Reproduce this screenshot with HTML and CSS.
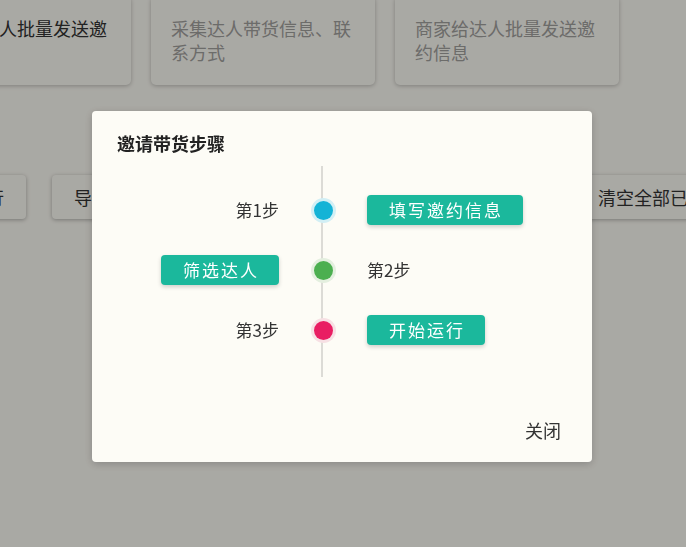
FILE: index.html
```html
<!DOCTYPE html>
<html lang="zh-CN">
<head>
    <meta charset="UTF-8">
    <meta name="viewport" content="width=device-width, initial-scale=1.0">
    <title>邀请带货步骤</title>
    <link rel="stylesheet" href="styles.css">
</head>
<body>
    <div class="page">
        <div class="card-row">
            <div class="card card-active">商家给达人批量发送邀约信息</div>
            <div class="card">采集达人带货信息、联系方式</div>
            <div class="card">商家给达人批量发送邀约信息</div>
        </div>
        <div class="btn-row">
            <button class="btn">开始运行</button>
            <button class="btn">导出数据</button>
            <button class="btn">导入达人</button>
            <button class="btn">批量邀约全部已选达</button>
            <button class="btn btn-last">清空全部已选达人</button>
        </div>
    </div>

    <div class="overlay">
        <div class="dialog">
            <h2 class="dialog-title">邀请带货步骤</h2>
            <div class="timeline">
                <div class="step">
                    <div class="step-left"><span class="step-label">第1步</span></div>
                    <div class="step-mid"><span class="dot dot-blue"></span></div>
                    <div class="step-right"><span class="tag">填写邀约信息</span></div>
                </div>
                <div class="step">
                    <div class="step-left"><span class="tag">筛选达人</span></div>
                    <div class="step-mid"><span class="dot dot-green"></span></div>
                    <div class="step-right"><span class="step-label">第2步</span></div>
                </div>
                <div class="step">
                    <div class="step-left"><span class="step-label">第3步</span></div>
                    <div class="step-mid"><span class="dot dot-pink"></span></div>
                    <div class="step-right"><span class="tag">开始运行</span></div>
                </div>
            </div>
            <div class="dialog-footer">
                <button class="close-btn">关闭</button>
            </div>
        </div>
    </div>
</body>
</html>
```

FILE: styles.css
```css
body {
    margin: 0;
    font-family: "Noto Sans CJK SC", "Liberation Sans", sans-serif;
    background-color: #fdfcf5;
    color: #333;
    overflow: hidden;
    height: 547px;
}
.page {
    width: 686px;
}
.card-row {
    display: flex;
    gap: 20px;
    margin-left: -93px;
    margin-top: -4px;
}
.card {
    flex: none;
    width: 224px;
    box-sizing: border-box;
    padding: 20px 20px 21px;
    font-size: 18px;
    line-height: 24px;
    color: #a2a19e;
    background-color: #fdfcf5;
    border-radius: 5px;
    box-shadow: 0 1px 4px rgba(0, 0, 0, 0.25);
}
.card-active {
    color: #333;
}
.btn-row {
    display: flex;
    gap: 26px;
    margin-left: -90px;
    margin-top: 90px;
}
.btn {
    flex: none;
    height: 44px;
    padding: 0 22px;
    font-family: inherit;
    font-size: 18px;
    color: #333;
    background-color: #fdfcf5;
    border: none;
    border-radius: 4px;
    box-shadow: 0 1px 4px rgba(0, 0, 0, 0.3);
    white-space: nowrap;
}
.btn-last {
    margin-left: 8px;
}

/* dialog */
.overlay {
    position: fixed;
    top: 0;
    left: 0;
    right: 0;
    bottom: 0;
    background-color: rgba(0, 0, 0, 0.33);
    display: flex;
    justify-content: center;
    align-items: flex-start;
    padding-top: 111px;
}
.dialog {
    width: 500px;
    margin-right: 2px;
    background-color: #fdfcf6;
    border-radius: 4px;
    box-shadow: 0 2px 8px rgba(0, 0, 0, 0.2);
}
.dialog-title {
    margin: 0;
    padding: 22px 25px 0;
    font-size: 18px;
    line-height: 20px;
    font-weight: bold;
    color: #222;
}
.timeline {
    position: relative;
    margin-top: 13px;
    padding: 14px 0 17px;
}
.timeline::before {
    content: "";
    position: absolute;
    top: 0;
    bottom: 0;
    left: 229px;
    width: 2px;
    background-color: #dcdbd6;
}
.step {
    display: grid;
    grid-template-columns: 187px 88px 1fr;
    align-items: center;
    height: 60px;
}
.step-left {
    text-align: right;
}
.step-mid {
    display: flex;
    justify-content: center;
    position: relative;
}
.step-label {
    font-size: 17px;
    line-height: 24px;
    color: #333;
}
.tag {
    display: inline-block;
    height: 30px;
    line-height: 30px;
    padding: 0 20px 0 22px;
    font-size: 17px;
    letter-spacing: 2px;
    color: #fff;
    background-color: #1bb89c;
    border-radius: 4px;
    box-shadow: 0 2px 4px rgba(0, 0, 0, 0.18);
}
.dot {
    display: block;
    width: 19px;
    height: 19px;
    border-radius: 50%;
}
.dot-blue {
    background-color: #14b3d6;
    box-shadow: 0 0 0 3px #d2eff5;
}
.dot-green {
    background-color: #4caf50;
    box-shadow: 0 0 0 3px #e4efdf;
}
.dot-pink {
    background-color: #e91e63;
    box-shadow: 0 0 0 3px #f7e0e4;
}
.dialog-footer {
    padding: 41px 31px 19px;
    text-align: right;
}
.close-btn {
    padding: 0;
    border: none;
    background: none;
    font-family: inherit;
    font-size: 18px;
    line-height: 24px;
    color: #333;
    cursor: pointer;
}
```
